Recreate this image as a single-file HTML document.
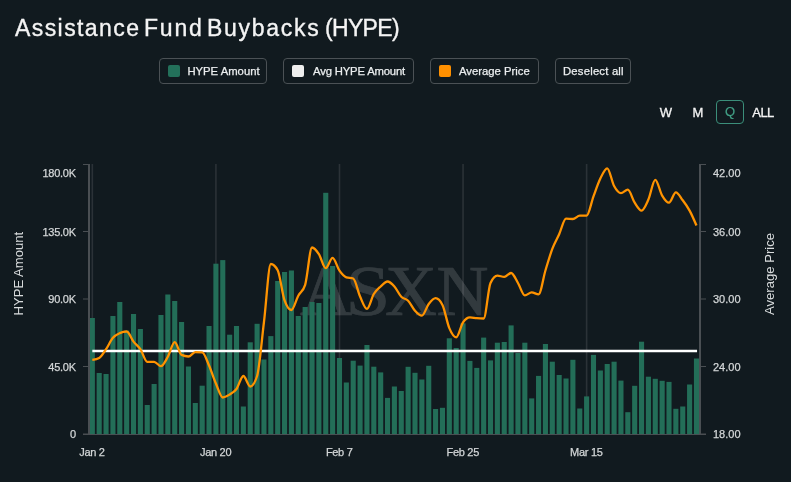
<!DOCTYPE html>
<html><head><meta charset="utf-8">
<style>
html,body{margin:0;padding:0;}
body{width:791px;height:482px;overflow:hidden;background:#111a1f;font-family:"Liberation Sans",sans-serif;position:relative;color:#fff;}
.title{position:absolute;top:14px;font-size:23px;line-height:28px;-webkit-text-stroke:0.35px #f4f4f4;color:#f4f4f4;white-space:nowrap;}
.btn{position:absolute;top:58px;height:24px;border:1px solid #4b5155;border-radius:4px;box-sizing:content-box;font-size:11.3px;color:#eceff0;}
.btn .sq{position:absolute;left:8px;top:6px;width:12px;height:12px;border-radius:2px;}
.btn .tx{position:absolute;top:0;line-height:24px;white-space:nowrap;-webkit-text-stroke:0.25px #eceff0;}
.rng{position:absolute;top:101px;height:23px;font-size:13px;line-height:23px;color:#f4f4f4;text-align:center;-webkit-text-stroke:0.3px #f4f4f4;}
svg{position:absolute;left:0;top:0;will-change:transform;}
.title,.btn,.rng{will-change:transform;}
</style></head><body>
<div class="title" style="left:15px;letter-spacing:1.42px">Assistance</div>
<div class="title" style="left:144.4px;letter-spacing:1.77px">Fund</div>
<div class="title" style="left:207px;letter-spacing:1.73px">Buybacks</div>
<div class="title" style="left:324.5px;letter-spacing:-0.68px">(HYPE)</div>
<div class="btn" style="left:159px;width:106px"><div class="sq" style="background:#23705a"></div><div class="tx" style="left:27.4px">HYPE Amount</div></div>
<div class="btn" style="left:283px;width:129px"><div class="sq" style="background:#eeeeee"></div><div class="tx" style="left:29px;letter-spacing:-0.17px">Avg HYPE Amount</div></div>
<div class="btn" style="left:430px;width:107px"><div class="sq" style="background:#ff9000"></div><div class="tx" style="left:28px">Average Price</div></div>
<div class="btn" style="left:555px;width:74px"><div class="tx" style="left:7px;letter-spacing:0.2px">Deselect all</div></div>
<div class="rng" style="left:656px;width:20px">W</div>
<div class="rng" style="left:688px;width:20px">M</div>
<div class="rng" style="left:716px;width:26px;border:1px solid #3b8e7a;border-radius:4px;color:#42a086;-webkit-text-stroke:0.2px #42a086;height:22px;line-height:21px;top:100px">Q</div>
<div class="rng" style="left:750.5px;width:24px;letter-spacing:-0.6px">ALL</div>
<svg width="791" height="482" viewBox="0 0 791 482">
<g stroke="#2b3237" stroke-width="1.6"><line x1="92.33" x2="92.33" y1="164" y2="434"/><line x1="215.91" x2="215.91" y1="164" y2="434"/><line x1="339.48" x2="339.48" y1="164" y2="434"/><line x1="463.05" x2="463.05" y1="164" y2="434"/><line x1="586.62" x2="586.62" y1="164" y2="434"/></g>
<g opacity="0.14" font-family="Liberation Serif" font-size="72" fill="#ffffff" stroke="#ffffff" stroke-width="0.7"><text x="300" y="315">A</text><text x="348" y="315" transform="translate(368,0) scale(1.12,1) translate(-368,0)">S</text><text x="385 436.5" y="315">XN</text></g>
<g fill="#236e58"><rect x="89.78" y="318.0" width="5.10" height="116.0"/>
<rect x="96.65" y="373.0" width="5.10" height="61.0"/>
<rect x="103.51" y="374.0" width="5.10" height="60.0"/>
<rect x="110.38" y="316.0" width="5.10" height="118.0"/>
<rect x="117.24" y="302.0" width="5.10" height="132.0"/>
<rect x="124.11" y="330.5" width="5.10" height="103.5"/>
<rect x="130.97" y="314.0" width="5.10" height="120.0"/>
<rect x="137.84" y="329.0" width="5.10" height="105.0"/>
<rect x="144.70" y="405.0" width="5.10" height="29.0"/>
<rect x="151.57" y="384.0" width="5.10" height="50.0"/>
<rect x="158.43" y="315.0" width="5.10" height="119.0"/>
<rect x="165.30" y="294.5" width="5.10" height="139.5"/>
<rect x="172.16" y="301.0" width="5.10" height="133.0"/>
<rect x="179.03" y="322.0" width="5.10" height="112.0"/>
<rect x="185.89" y="366.5" width="5.10" height="67.5"/>
<rect x="192.76" y="403.0" width="5.10" height="31.0"/>
<rect x="199.63" y="385.7" width="5.10" height="48.3"/>
<rect x="206.49" y="326.0" width="5.10" height="108.0"/>
<rect x="213.36" y="263.7" width="5.10" height="170.3"/>
<rect x="220.22" y="260.1" width="5.10" height="173.9"/>
<rect x="227.09" y="334.7" width="5.10" height="99.3"/>
<rect x="233.95" y="326.0" width="5.10" height="108.0"/>
<rect x="240.82" y="406.5" width="5.10" height="27.5"/>
<rect x="247.68" y="342.3" width="5.10" height="91.7"/>
<rect x="254.55" y="323.8" width="5.10" height="110.2"/>
<rect x="261.41" y="359.5" width="5.10" height="74.5"/>
<rect x="268.28" y="336.1" width="5.10" height="97.9"/>
<rect x="275.14" y="281.0" width="5.10" height="153.0"/>
<rect x="282.01" y="272.0" width="5.10" height="162.0"/>
<rect x="288.87" y="270.5" width="5.10" height="163.5"/>
<rect x="295.74" y="316.0" width="5.10" height="118.0"/>
<rect x="302.60" y="307.0" width="5.10" height="127.0"/>
<rect x="309.47" y="302.0" width="5.10" height="132.0"/>
<rect x="316.33" y="303.0" width="5.10" height="131.0"/>
<rect x="323.20" y="192.8" width="5.10" height="241.2"/>
<rect x="330.06" y="266.0" width="5.10" height="168.0"/>
<rect x="336.93" y="358.0" width="5.10" height="76.0"/>
<rect x="343.79" y="382.5" width="5.10" height="51.5"/>
<rect x="350.66" y="360.7" width="5.10" height="73.3"/>
<rect x="357.52" y="365.6" width="5.10" height="68.4"/>
<rect x="364.39" y="345.0" width="5.10" height="89.0"/>
<rect x="371.25" y="366.7" width="5.10" height="67.3"/>
<rect x="378.12" y="372.4" width="5.10" height="61.6"/>
<rect x="384.98" y="397.9" width="5.10" height="36.1"/>
<rect x="391.85" y="386.5" width="5.10" height="47.5"/>
<rect x="398.72" y="391.0" width="5.10" height="43.0"/>
<rect x="405.58" y="366.8" width="5.10" height="67.2"/>
<rect x="412.45" y="372.8" width="5.10" height="61.2"/>
<rect x="419.31" y="379.5" width="5.10" height="54.5"/>
<rect x="426.18" y="365.8" width="5.10" height="68.2"/>
<rect x="433.04" y="409.0" width="5.10" height="25.0"/>
<rect x="439.91" y="407.8" width="5.10" height="26.2"/>
<rect x="446.77" y="338.3" width="5.10" height="95.7"/>
<rect x="453.64" y="348.0" width="5.10" height="86.0"/>
<rect x="460.50" y="323.3" width="5.10" height="110.7"/>
<rect x="467.37" y="360.9" width="5.10" height="73.1"/>
<rect x="474.23" y="367.9" width="5.10" height="66.1"/>
<rect x="481.10" y="337.6" width="5.10" height="96.4"/>
<rect x="487.96" y="360.4" width="5.10" height="73.6"/>
<rect x="494.83" y="342.7" width="5.10" height="91.3"/>
<rect x="501.69" y="342.0" width="5.10" height="92.0"/>
<rect x="508.56" y="325.4" width="5.10" height="108.6"/>
<rect x="515.42" y="353.0" width="5.10" height="81.0"/>
<rect x="522.29" y="342.7" width="5.10" height="91.3"/>
<rect x="529.15" y="398.4" width="5.10" height="35.6"/>
<rect x="536.02" y="375.9" width="5.10" height="58.1"/>
<rect x="542.88" y="344.0" width="5.10" height="90.0"/>
<rect x="549.75" y="361.7" width="5.10" height="72.3"/>
<rect x="556.61" y="375.0" width="5.10" height="59.0"/>
<rect x="563.48" y="378.5" width="5.10" height="55.5"/>
<rect x="570.34" y="359.8" width="5.10" height="74.2"/>
<rect x="577.21" y="408.5" width="5.10" height="25.5"/>
<rect x="584.07" y="396.4" width="5.10" height="37.6"/>
<rect x="590.94" y="354.9" width="5.10" height="79.1"/>
<rect x="597.81" y="370.5" width="5.10" height="63.5"/>
<rect x="604.67" y="364.0" width="5.10" height="70.0"/>
<rect x="611.54" y="361.7" width="5.10" height="72.3"/>
<rect x="618.40" y="380.6" width="5.10" height="53.4"/>
<rect x="625.27" y="412.2" width="5.10" height="21.8"/>
<rect x="632.13" y="385.8" width="5.10" height="48.2"/>
<rect x="639.00" y="341.7" width="5.10" height="92.3"/>
<rect x="645.86" y="376.7" width="5.10" height="57.3"/>
<rect x="652.73" y="378.8" width="5.10" height="55.2"/>
<rect x="659.59" y="380.8" width="5.10" height="53.2"/>
<rect x="666.46" y="381.9" width="5.10" height="52.1"/>
<rect x="673.32" y="408.8" width="5.10" height="25.2"/>
<rect x="680.19" y="406.5" width="5.10" height="27.5"/>
<rect x="687.05" y="384.5" width="5.10" height="49.5"/>
<rect x="693.92" y="358.5" width="5.10" height="75.5"/></g>
<line x1="92.33" x2="697.07" y1="351" y2="351" stroke="#ffffff" stroke-width="2.5" stroke-linecap="butt"/>
<path d="M92.33,359.90C94.62,359.58,96.91,359.27,99.20,358.00C101.49,356.73,103.77,352.57,106.06,349.20C108.35,345.83,110.64,340.48,112.93,337.80C115.22,335.12,117.50,334.15,119.79,333.10C122.08,332.05,124.37,331.50,126.66,331.50C128.95,331.50,131.24,338.65,133.52,341.60C135.81,344.55,138.10,345.83,140.39,349.20C142.68,352.57,144.97,361.80,147.25,361.80C149.54,361.80,151.83,361.80,154.12,361.80C156.41,361.80,158.70,366.20,160.98,366.20C163.27,366.20,165.56,360.80,167.85,356.80C170.14,352.80,172.43,342.20,174.71,342.20C177.00,342.20,179.29,353.83,181.58,354.90C183.87,355.97,186.16,356.50,188.44,356.50C190.73,356.50,193.02,352.10,195.31,352.10C197.60,352.10,199.89,352.20,202.18,352.40C204.46,352.60,206.75,360.32,209.04,365.50C211.33,370.68,213.62,378.17,215.91,383.50C218.19,388.83,220.48,397.50,222.77,397.50C225.06,397.50,227.35,395.92,229.64,394.50C231.92,393.08,234.21,392.08,236.50,389.00C238.79,385.92,241.08,376.00,243.37,376.00C245.65,376.00,247.94,386.50,250.23,386.50C252.52,386.50,254.81,383.00,257.10,376.00C259.39,369.00,261.67,340.67,263.96,322.00C266.25,303.33,268.54,264.00,270.83,264.00C273.12,264.00,275.40,266.07,277.69,270.20C279.98,274.33,282.27,294.00,284.56,300.40C286.85,306.80,289.13,310.00,291.42,310.00C293.71,310.00,296.00,299.90,298.29,295.70C300.58,291.50,302.86,292.07,305.15,284.80C307.44,277.53,309.73,247.50,312.02,247.50C314.31,247.50,316.59,250.65,318.88,254.10C321.17,257.55,323.46,268.20,325.75,268.20C328.04,268.20,330.33,257.90,332.61,257.90C334.90,257.90,337.19,267.45,339.48,270.70C341.77,273.95,344.06,276.67,346.34,277.40C348.63,278.13,350.92,277.77,353.21,278.50C355.50,279.23,357.79,291.43,360.07,296.50C362.36,301.57,364.65,308.90,366.94,308.90C369.23,308.90,371.52,297.73,373.80,294.00C376.09,290.27,378.38,288.58,380.67,286.50C382.96,284.42,385.25,281.50,387.53,281.50C389.82,281.50,392.11,283.95,394.40,286.50C396.69,289.05,398.98,294.43,401.27,296.80C403.55,299.17,405.84,298.38,408.13,300.70C410.42,303.02,412.71,308.20,415.00,310.70C417.28,313.20,419.57,315.70,421.86,315.70C424.15,315.70,426.44,306.92,428.73,304.00C431.01,301.08,433.30,298.20,435.59,298.20C437.88,298.20,440.17,300.43,442.46,304.90C444.74,309.37,447.03,322.70,449.32,328.10C451.61,333.50,453.90,337.30,456.19,337.30C458.47,337.30,460.76,325.63,463.05,322.30C465.34,318.97,467.63,317.30,469.92,317.30C472.21,317.30,474.49,318.00,476.78,318.20C479.07,318.40,481.36,318.50,483.65,318.50C485.94,318.50,488.22,287.87,490.51,283.00C492.80,278.13,495.09,275.70,497.38,275.70C499.67,275.70,501.95,276.80,504.24,276.80C506.53,276.80,508.82,273.00,511.11,273.00C513.40,273.00,515.68,279.27,517.97,283.00C520.26,286.73,522.55,295.40,524.84,295.40C527.13,295.40,529.41,292.30,531.70,292.30C533.99,292.30,536.28,294.40,538.57,294.40C540.86,294.40,543.15,278.10,545.43,270.50C547.72,262.90,550.01,254.85,552.30,248.80C554.59,242.75,556.88,239.22,559.16,234.20C561.45,229.18,563.74,218.70,566.03,218.70C568.32,218.70,570.61,219.00,572.89,219.00C575.18,219.00,577.47,215.60,579.76,215.60C582.05,215.60,584.34,215.60,586.62,215.60C588.91,215.60,591.20,202.48,593.49,196.30C595.78,190.12,598.07,183.17,600.36,178.50C602.64,173.83,604.93,168.30,607.22,168.30C609.51,168.30,611.80,181.85,614.09,186.00C616.37,190.15,618.66,193.20,620.95,193.20C623.24,193.20,625.53,189.70,627.82,189.70C630.10,189.70,632.39,199.22,634.68,202.70C636.97,206.18,639.26,210.60,641.55,210.60C643.83,210.60,646.12,204.63,648.41,199.50C650.70,194.37,652.99,179.80,655.28,179.80C657.56,179.80,659.85,191.78,662.14,195.60C664.43,199.42,666.72,202.70,669.01,202.70C671.30,202.70,673.58,192.40,675.87,192.40C678.16,192.40,680.45,197.27,682.74,200.30C685.03,203.33,687.31,206.40,689.60,210.60C691.89,214.80,694.18,220.15,696.47,225.50" fill="none" stroke="#ff9300" stroke-width="2.3"/>
<g stroke="#4a4f53" stroke-width="2">
<line x1="89" x2="89" y1="164" y2="434"/>
<line x1="700" x2="700" y1="164" y2="434"/>
</g>
<g stroke="#4a4f53" stroke-width="1">
<line x1="83" x2="706" y1="434.5" y2="434.5"/>
<line x1="83" x2="89" y1="164.5" y2="164.5"/><line x1="83" x2="89" y1="231.5" y2="231.5"/><line x1="83" x2="89" y1="299.0" y2="299.0"/><line x1="83" x2="89" y1="366.5" y2="366.5"/><line x1="83" x2="89" y1="434.0" y2="434.0"/><line x1="700" x2="706" y1="164.5" y2="164.5"/><line x1="700" x2="706" y1="231.5" y2="231.5"/><line x1="700" x2="706" y1="299.0" y2="299.0"/><line x1="700" x2="706" y1="366.5" y2="366.5"/><line x1="700" x2="706" y1="434.0" y2="434.0"/>
</g>
<g font-size="11" fill="#d4d7d8" stroke="#d4d7d8" stroke-width="0.25"><text x="75.8" y="173.0" text-anchor="end" dy="4" letter-spacing="-0.25">180.0K</text><text x="75.8" y="231.5" text-anchor="end" dy="4" letter-spacing="-0.25">135.0K</text><text x="75.8" y="299.0" text-anchor="end" dy="4" letter-spacing="-0.25">90.0K</text><text x="75.8" y="366.5" text-anchor="end" dy="4" letter-spacing="-0.25">45.0K</text><text x="75.8" y="434.0" text-anchor="end" dy="4" letter-spacing="-0.25">0</text><text x="713" y="173.0" dy="4">42.00</text><text x="713" y="231.5" dy="4">36.00</text><text x="713" y="299.0" dy="4">30.00</text><text x="713" y="366.5" dy="4">24.00</text><text x="713" y="434.0" dy="4">18.00</text><text x="92.0" y="456" text-anchor="middle" letter-spacing="-0.3">Jan 2</text><text x="215.6" y="456" text-anchor="middle" letter-spacing="-0.3">Jan 20</text><text x="339.2" y="456" text-anchor="middle" letter-spacing="-0.3">Feb 7</text><text x="462.8" y="456" text-anchor="middle" letter-spacing="-0.3">Feb 25</text><text x="586.3" y="456" text-anchor="middle" letter-spacing="-0.3">Mar 15</text></g>
<text transform="translate(23,273.7) rotate(-90)" text-anchor="middle" font-size="13.1" fill="#d9dcdd">HYPE Amount</text>
<text transform="translate(774,274) rotate(-90)" text-anchor="middle" font-size="13.1" fill="#d9dcdd">Average Price</text>
</svg>
</body></html>
